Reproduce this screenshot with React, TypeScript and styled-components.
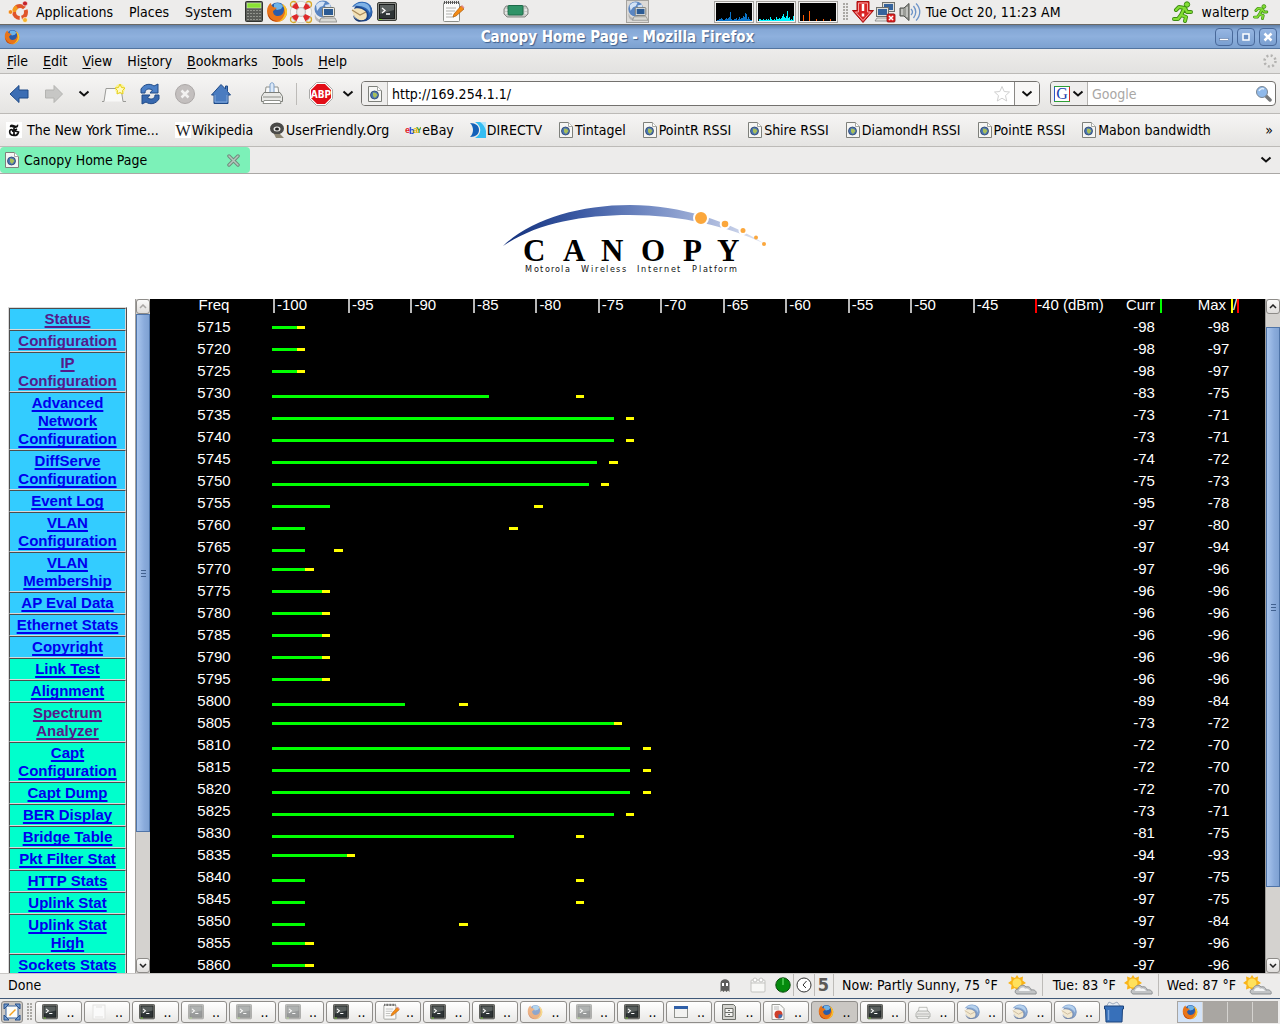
import React from "react";
import styled, { createGlobalStyle, css } from "styled-components";

const GlobalStyle = createGlobalStyle`
  * { box-sizing: border-box; }
  html, body { margin: 0; padding: 0; }
  body { background: #edeceb; color: #000; font: 14px/16px "DejaVu Sans Condensed", "DejaVu Sans", sans-serif; }
  button, input { font: inherit; color: inherit; }
`;

/* ---------- shared parts ---------- */

const Desktop = styled.div`
  display: flex;
  flex-direction: column;
  height: 100vh;
  overflow: hidden;
`;

const Group = styled.div<{ $gap?: number; $left?: number; $push?: boolean }>`
  display: flex;
  align-items: center;
  flex: none;
  gap: ${(p) => p.$gap ?? 0}px;
  margin-left: ${(p) => (p.$push ? "auto" : `${p.$left ?? 0}px`)};
`;

const IconButton = styled.button<{ $size?: number }>`
  display: flex;
  align-items: center;
  justify-content: center;
  flex: none;
  width: ${(p) => p.$size ?? 24}px;
  height: 24px;
  padding: 0;
  border: 0;
  background: none;
  svg { display: block; flex: none; }
`;

/* ---------- icons ---------- */

const Firefox = ({ s = 22, faded = false }: { s?: number; faded?: boolean }) => (
  <svg width={s} height={s} viewBox="0 0 22 22" opacity={faded ? 0.5 : 1} aria-hidden="true">
    <circle cx="11.5" cy="10" r="8.5" fill="#2a5caa" />
    <path d="M8 3c3-2 7-1 9 2l-2 3-4 1-3-2z" fill="#6db3e8" />
    <path d="M1 10C1 6 3 3 5 2c0 2 1 3 2 4l4 1c-2 1-2 2-4 3 0 3 2 5 5 5 4 0 6-3 6-7 0-2-1-4-2-5 4 2 5 5 5 8 0 6-5 10-10 10S1 17 1 10z" fill="#e8741a" />
    <path d="M16 3c4 2 5 5 5 8 0 5-4 9-9 10 4-2 6-5 7-9 0-3-1-6-3-9z" fill="#f9c62b" />
    <path d="M2 12c1 5 5 8 9 8-4 1-9-2-9-8z" fill="#a93408" />
  </svg>
);

const Thunderbird = ({ s = 22, faded = false }: { s?: number; faded?: boolean }) => (
  <svg width={s} height={s} viewBox="0 0 22 22" opacity={faded ? 0.55 : 1} aria-hidden="true">
    <circle cx="12" cy="11" r="9.5" fill="#1b4488" />
    <path d="M1 6C4 2 8 0 13 1c5 0 9 5 8 11-1 3-2 5-4 7 1-4 1-7-2-10-3-2-8-5-14-3z" fill="#2c66b4" />
    <path d="M3 5c4-4 9-4 13-2 3 2 4 6 3 9-2-5-8-8-16-7z" fill="#7fb2e6" />
    <path d="M1 9c4-3 10-2 13 1 3 3 2 8-1 9-6 2-11-4-12-10z" fill="#f3e2b8" />
    <path d="M1 9l8 5 6-3" fill="none" stroke="#a98a5a" strokeWidth="1.2" />
    <path d="M2 14c2 5 8 7 13 4-5 5-12 3-13-4z" fill="#16366f" />
  </svg>
);

const Terminal = ({ s = 20, faded = false }: { s?: number; faded?: boolean }) => (
  <svg width={s} height={s} viewBox="0 0 20 20" opacity={faded ? 0.45 : 1} aria-hidden="true">
    <rect x="0.5" y="0.5" width="19" height="18" rx="1.5" fill="#8b8d88" stroke="#3c3e3a" />
    <rect x="2.5" y="2.5" width="15" height="14" fill="#2e3436" stroke="#1a1c1c" />
    <path d="M3 3h14v5L3 12z" fill="#5a605f" />
    <path d="M5 6l3 2.5L5 11M9 12h4" fill="none" stroke="#fff" strokeWidth="1.3" />
    <path d="M2 17.500h3" stroke="#7ad42c" />
  </svg>
);

const Ubuntu = () => (
  <svg width="24" height="24" viewBox="0 0 24 24" aria-hidden="true">
    <circle cx="13" cy="12" r="6" fill="none" stroke="#e0552a" strokeWidth="4" strokeDasharray="10.5 2" strokeDashoffset="3" />
    <path d="M7 12a6 6 0 0 1 3-5" fill="none" stroke="#f49a1e" strokeWidth="4" />
    <circle cx="3.5" cy="12" r="2.300" fill="#f08a1c" stroke="#fff" strokeWidth="0.600" />
    <circle cx="18" cy="3.500" r="2.500" fill="#c4232a" stroke="#fff" strokeWidth="0.600" />
    <circle cx="18" cy="20" r="2.500" fill="#f7b42c" stroke="#fff" strokeWidth="0.600" />
  </svg>
);

const Calculator = () => (
  <svg width="20" height="24" viewBox="0 0 20 24" aria-hidden="true">
    <rect x="1.500" y="1.500" width="17" height="20" rx="1" fill="#5b5d59" stroke="#30322f" />
    <rect x="3" y="3" width="14" height="5" fill="#8ae234" stroke="#dfeccd" strokeWidth="0.500" />
    {[11, 14, 17, 20].map((y) => (
      <path key={y} d={`M3 ${y - 0.5}h14`} stroke="#93958f" strokeDasharray="2 1" />
    ))}
  </svg>
);

const Lifebuoy = () => (
  <svg width="24" height="24" viewBox="0 0 24 24" aria-hidden="true">
    <g fill="none" stroke="#d9a928" strokeWidth="1.300">
      <circle cx="4.500" cy="4.500" r="3" />
      <circle cx="19.500" cy="4.500" r="3" />
      <circle cx="4.500" cy="19.500" r="3" />
      <circle cx="19.500" cy="19.500" r="3" />
    </g>
    <circle cx="12" cy="12" r="7.500" fill="none" stroke="#bdbdba" strokeWidth="6.600" />
    <circle cx="12" cy="12" r="7.500" fill="none" stroke="#f6f6f4" strokeWidth="5.600" />
    <circle cx="12" cy="12" r="7.500" fill="none" stroke="#dd2a2a" strokeWidth="5.600" strokeDasharray="5 6.780" strokeDashoffset="-3.400" />
    <circle cx="12" cy="12" r="4.300" fill="#edeceb" stroke="#999" strokeWidth="0.500" />
  </svg>
);

const GlobeComputer = ({ s = 24 }: { s?: number }) => (
  <svg width={s} height={s} viewBox="0 0 24 24" aria-hidden="true">
    <circle cx="10" cy="9" r="8.500" fill="#5a86c2" />
    <path d="M3 5c3-4 6-4 9-3l-2 4-3 1-3 4zM12 5l5-1 1 4-5 2z" fill="#d3e2f5" />
    <rect x="9.500" y="7.500" width="12" height="9" rx="1" fill="#e8e8e4" stroke="#73756f" />
    <rect x="11" y="9" width="9" height="6" fill="#2b5b94" />
    <path d="M8 18h14l2 4H6z" fill="#d8d8d3" stroke="#7b7d78" strokeWidth="0.700" />
    <path d="M2 14c1 4 4 6 6 5l-1 3c-4 0-6-4-5-8z" fill="#999" opacity="0.600" />
  </svg>
);

const Notepad = ({ s = 24 }: { s?: number }) => (
  <svg width={s} height={s} viewBox="0 0 24 24" aria-hidden="true">
    <rect x="2.500" y="2.500" width="16" height="19" rx="1" fill="#fbfbfa" stroke="#8d8f8a" />
    <path d="M3 2.500h15" stroke="#555" strokeWidth="3" strokeDasharray="1 1" />
    <path d="M5 8h10M5 11h9M5 14h6M5 17h8" stroke="#b0b0ac" />
    <path d="M20 6l3 3-8 7-3 1 1-3z" fill="#f58b14" stroke="#a85a08" strokeWidth="0.700" />
    <path d="M20.500 5.500L23 8" stroke="#e58a8a" strokeWidth="1.500" />
  </svg>
);

const Chip = () => (
  <svg width="26" height="18" viewBox="0 0 26 18" aria-hidden="true">
    <path d="M3 3h20l2 3v5l-3 3H4l-3-3V6z" fill="#c9cac7" stroke="#858782" />
    <rect x="5" y="2.500" width="15" height="9.500" rx="1" fill="#2f9367" stroke="#1e6a49" />
    <path d="M2 7h2.500M2 10h2.500M21.500 7H24M21.500 10H24" stroke="#fff" />
  </svg>
);

const UpdateArrow = () => (
  <svg width="22" height="24" viewBox="0 0 22 24" aria-hidden="true">
    <path d="M5 1.500h12v9h4.500L11 22.500.5 10.500H5z" fill="#d92525" stroke="#a80d0d" />
    <path d="M6.500 3h9v9h3L11 20.500 3.500 12h3z" fill="none" stroke="#f5a3a3" />
    <path d="M11 4v7M11 13.500v3" stroke="#fff" strokeWidth="2.500" />
  </svg>
);

const NetworkOff = () => (
  <svg width="24" height="24" viewBox="0 0 24 24" aria-hidden="true">
    <rect x="8.500" y="2.500" width="12" height="9" fill="#35639c" stroke="#6e706c" />
    <rect x="9.500" y="3.500" width="10" height="7" fill="none" stroke="#dededa" />
    <path d="M10 14h10v2H10z" fill="#e3e3df" stroke="#777" strokeWidth="0.600" />
    <rect x="2.500" y="7.500" width="12" height="9" fill="#35639c" stroke="#6e706c" />
    <rect x="3.500" y="8.500" width="10" height="7" fill="none" stroke="#dededa" />
    <path d="M1 21l2-3h11l2 3z" fill="#e3e3df" stroke="#777" strokeWidth="0.700" />
    <rect x="13" y="14" width="8" height="8" rx="1" fill="#e02323" stroke="#8d0b0b" strokeWidth="0.800" />
    <path d="M15 16l4 4M19 16l-4 4" stroke="#fff" strokeWidth="1.500" />
  </svg>
);

const Speaker = () => (
  <svg width="24" height="24" viewBox="0 0 24 24" aria-hidden="true">
    <path d="M2 8h4l5-4.500v17L6 16H2z" fill="#9b9d98" stroke="#4c4e4a" />
    <path d="M4 9v6M9 7v10" stroke="#e7e7e4" />
    <path d="M13 9c2 2 2 4 0 6M15.500 6c3 4 3 8 0 12M18 3.500c5 5 5 12 0 17" fill="none" stroke="#6c93c8" strokeWidth="1.300" />
  </svg>
);

const Runner = ({ s = 22 }: { s?: number }) => (
  <svg width={s} height={s} viewBox="0 0 22 22" aria-hidden="true">
    <g fill="none" strokeLinecap="round" strokeLinejoin="round">
      <path d="M4 9l3-3 6 1 2 4h4M12 8l-3 6 5 2-1 4M9 14l-3 4H2" stroke="#3d8b12" strokeWidth="4" />
      <path d="M4 9l3-3 6 1 2 4h4M12 8l-3 6 5 2-1 4M9 14l-3 4H2" stroke="#83de35" strokeWidth="2.200" />
    </g>
    <circle cx="15" cy="3.500" r="2.700" fill="#83de35" stroke="#3d8b12" />
  </svg>
);

const Arrow = ({ faded = false }: { faded?: boolean }) => (
  <svg width="20" height="20" viewBox="0 0 20 20" aria-hidden="true">
    {faded ? (
      <path d="M18.500 10L10 1.500V6H1.500v8H10v4.500z" fill="#c7c7c5" stroke="#b4b4b1" />
    ) : (
      <path d="M1 10l9-8.500V6h9v8h-9v4.500z" fill="#3c6eb4" stroke="#1f4a87" />
    )}
  </svg>
);

const Chevron = () => (
  <svg width="12" height="8" viewBox="0 0 12 8" aria-hidden="true">
    <path d="M1.500 1.500L6 5.500l4.500-4" fill="none" stroke="#111" strokeWidth="2" />
  </svg>
);

const NewTab = () => (
  <svg width="26" height="24" viewBox="0 0 26 24" aria-hidden="true">
    <path d="M1 19.500h2l2-13h15l2 13h3" fill="#f8f8f7" stroke="#9b9b98" />
    <circle cx="19" cy="7" r="5" fill="#fdf27b" opacity="0.800" />
    <path d="M19 2l1.500 3.500 3.500.5-2.500 2.500.5 3.500-3-1.500-3 1.500.5-3.500L14 6l3.500-.5z" fill="#fff9c2" stroke="#e5cf1b" />
  </svg>
);

const Reload = () => (
  <svg width="22" height="22" viewBox="0 0 22 22" aria-hidden="true">
    <path d="M2 10V6c3-5 9-6 13-3l4-2v9h-8l2.500-3C10 5 6 6 6 10z" fill="#4a7fc6" stroke="#1f4a87" />
    <path d="M20 12v4c-3 5-9 6-13 3l-4 2v-9h8l-2.500 3c3.500 2 7.500 1 7.500-3z" fill="#3768ae" stroke="#1f4a87" />
  </svg>
);

const Stop = () => (
  <svg width="22" height="22" viewBox="0 0 22 22" aria-hidden="true">
    <circle cx="11" cy="11" r="9.500" fill="#c3bfbe" stroke="#aca8a7" />
    <path d="M7.500 7.500l7 7M14.500 7.500l-7 7" stroke="#f3f2f1" strokeWidth="2.500" />
  </svg>
);

const Home = () => (
  <svg width="22" height="22" viewBox="0 0 22 22" aria-hidden="true">
    <path d="M11 1.500L1.500 12H4v8.500h14V12h2.500l-3-3.500V3h-2v3z" fill="#4a7cc0" stroke="#1f4a87" />
    <path d="M5 12v7h12v-7" fill="none" stroke="#82a9dc" />
  </svg>
);

const Printer = ({ s = 24, faded = false }: { s?: number; faded?: boolean }) => (
  <svg width={s} height={s} viewBox="0 0 24 24" opacity={faded ? 0.8 : 1} aria-hidden="true">
    <path d="M6 5h12l1 8H5z" fill="#fafaf9" stroke="#8e908b" />
    {!faded && <path d="M10 10V3c0-3 4-3 4 0v7" fill="#dbe8f7" stroke="#7d9fc9" />}
    <path d="M4 10.500h16l2.500 4v5h-21v-5z" fill="#e9e9e6" stroke="#7c7e79" />
    <path d="M3 15h18" stroke="#8b8d88" />
    <path d="M4 18.500h16l1 3H3z" fill="#fff" stroke="#8e908b" />
  </svg>
);

const AdBlock = () => (
  <svg width="24" height="24" viewBox="0 0 24 24" aria-hidden="true">
    <path d="M7.500.5h9l7 7v9l-7 7h-9l-7-7v-9z" fill="#fff" stroke="#a9a9a7" />
    <path d="M8 2h8l6 6v8l-6 6H8l-6-6V8z" fill="#e20d17" />
    <text x="12" y="16" textAnchor="middle" fontFamily="DejaVu Sans Condensed" fontWeight="bold" fontSize="10" fill="#fff">ABP</text>
  </svg>
);

const PageGlobe = () => (
  <svg width="16" height="16" viewBox="0 0 16 16" aria-hidden="true">
    <path d="M1.500.5h9l4 4v11h-13z" fill="#f6f6f4" stroke="#7e807b" />
    <path d="M10.500.5v4h4" fill="#fff" stroke="#a5a7a2" />
    <circle cx="7.500" cy="9" r="4" fill="#4d78b3" stroke="#29406b" strokeWidth="0.800" />
    <path d="M6 6.500l3 .5 1.500 2-2.500 3-2-2z" fill="#a9bf5a" />
  </svg>
);

const Star = () => (
  <svg width="18" height="18" viewBox="0 0 18 18" aria-hidden="true">
    <path d="M9 1.500l2.200 5 5.300.5-4 3.600 1.200 5.400L9 13.200 4.300 16l1.200-5.400-4-3.600 5.300-.5z" fill="#fff" stroke="#d0d0d0" />
  </svg>
);

const Magnifier = () => (
  <svg width="18" height="18" viewBox="0 0 18 18" aria-hidden="true">
    <path d="M11 11l4 4" stroke="#77797a" strokeWidth="3.500" strokeLinecap="round" />
    <circle cx="7" cy="7" r="5.500" fill="#8fb9ea" stroke="#7b8794" />
    <path d="M4 6c1-2 3-3 5-2" fill="none" stroke="#e3f0fd" strokeWidth="1.500" />
  </svg>
);

const GoogleG = () => (
  <svg width="16" height="16" viewBox="0 0 16 16" aria-hidden="true">
    <rect width="16" height="16" fill="#fff" />
    <path d="M.5 16V0" stroke="#2a56c6" />
    <path d="M0 .5h16M0 15.500h16" stroke="#2f9e36" />
    <path d="M15.500 1v14" stroke="#cc2a2a" />
    <text x="8" y="13" textAnchor="middle" fontFamily="Liberation Serif" fontSize="16" fill="#1a3fae">G</text>
  </svg>
);

const Throbber = () => (
  <svg width="14" height="14" viewBox="0 0 14 14" aria-hidden="true">
    <circle cx="7" cy="7" r="5.500" fill="none" stroke="#b3b2b0" strokeWidth="2.500" strokeDasharray="2 2.320" />
  </svg>
);

const TimesIcon = () => (
  <svg width="16" height="16" viewBox="0 0 16 16" aria-hidden="true">
    <rect width="16" height="16" fill="#fff" />
    <path d="M4 5.500C3 2 6 2 8 3s3 1 4-1c1 3-1 4-3 4S5 4 4 5.500z" fill="#111" />
    <path d="M8 6v8M11 7l-3 1.500M4 8c2-1 3 0 3 2M4 8c-1 3 0 5 4 5.500 2 0 4-1 4.500-3.500L9 9" fill="none" stroke="#111" strokeWidth="1.700" />
  </svg>
);

const WikiIcon = () => (
  <svg width="16" height="16" viewBox="0 0 16 16" aria-hidden="true">
    <rect width="16" height="16" fill="#fff" />
    <text x="8" y="14" textAnchor="middle" fontFamily="Liberation Serif" fontSize="16" fill="#222">W</text>
  </svg>
);

const UserFriendlyIcon = () => (
  <svg width="16" height="16" viewBox="0 0 16 16" aria-hidden="true">
    <ellipse cx="8" cy="6.500" rx="7" ry="6" fill="#4a4a48" />
    <ellipse cx="8" cy="7" rx="3.500" ry="2.500" fill="#e8e8e6" />
    <ellipse cx="8" cy="7" rx="2" ry="1.500" fill="#222" />
    <path d="M5 12h6l4 4H7z" fill="#8f8875" />
  </svg>
);

const EbayIcon = () => (
  <svg width="16" height="16" viewBox="0 0 16 16" aria-hidden="true">
    <g fontFamily="Liberation Sans" fontWeight="bold" fontSize="9">
      <text x="0" y="11" fill="#e21b1b">e</text>
      <text x="4" y="12" fill="#1a3fd0">b</text>
      <text x="8" y="11" fill="#e5b400">a</text>
      <text x="11" y="11" fill="#3c9a1a">Y</text>
    </g>
  </svg>
);

const DirectvIcon = () => (
  <svg width="16" height="16" viewBox="0 0 16 16" aria-hidden="true">
    <path d="M5 0h11v16H5c7-4 7-12 0-16z" fill="#35bdf2" />
    <path d="M10 0h6v9c-1-4-3-7-6-9z" fill="#b5e6fb" />
    <path d="M0 1c6 0 9 3 9 7s-3 7-9 7c4-4 4-10 0-14z" fill="#1461b8" />
  </svg>
);

const CloseX = () => (
  <svg width="13" height="13" viewBox="0 0 13 13" aria-hidden="true">
    <path d="M2 2l9 9M11 2l-9 9" stroke="#6f8a7c" strokeWidth="3.500" strokeLinecap="round" />
    <path d="M2 2l9 9M11 2l-9 9" stroke="#b4c8bd" strokeWidth="1.500" strokeLinecap="round" />
  </svg>
);

const Ghost = () => (
  <svg width="10" height="13" viewBox="0 0 10 13" aria-hidden="true">
    <path d="M.5 13V4C1-1 9-1 9.500 4v9L8 11.500 6.500 13 5 11.500 3.500 13 2 11.500z" fill="#5d5d5b" />
    <path d="M2 4h2v3H2zM6 4h2v3H6z" fill="#fff" />
  </svg>
);

const CalendarPage = () => (
  <svg width="16" height="16" viewBox="0 0 16 16" aria-hidden="true">
    <rect x="1" y="3" width="14" height="12" rx="1" fill="#f8f8f6" stroke="#c3c3c0" />
    <path d="M1 6h14" stroke="#c3c3c0" />
    <circle cx="5" cy="3" r="2" fill="#fff" stroke="#c3c3c0" />
    <circle cx="11" cy="3" r="2" fill="#fff" stroke="#c3c3c0" />
  </svg>
);

const GreenDial = () => (
  <svg width="16" height="16" viewBox="0 0 16 16" aria-hidden="true">
    <circle cx="8" cy="8" r="7.200" fill="#058a0d" stroke="#0a4d0d" />
    <path d="M8 8V1" stroke="#79f07c" />
  </svg>
);

const ClockFace = () => (
  <svg width="16" height="16" viewBox="0 0 16 16" aria-hidden="true">
    <circle cx="8" cy="8" r="7" fill="#fff" stroke="#333" />
    <path d="M10.500 4L7 8l3 3" fill="none" stroke="#333" />
  </svg>
);

const Weather = () => (
  <svg width="30" height="20" viewBox="0 0 30 20" aria-hidden="true">
    <path d="M9 0l2 3 4-1.500-.5 4L18 8l-3.500 2 .5 4.500-4-1.500-2 3.500L7 13l-4 1.500.5-4.500L0 8l3.500-2.500L3 1.500 7 3z" fill="#f9b418" />
    <circle cx="9" cy="8" r="4.500" fill="#ffe15c" />
    <path d="M9 19c-3-1-2-5 1-5 1-4 6-5 8-2 3-1 5 1 5 3 4-1 6 2 5 4z" fill="#c2c4c6" stroke="#8d9093" />
    <path d="M11 16c0-3 5-5 6-2 2-1 4 0 5 2z" fill="#f4f5f6" />
  </svg>
);

const ShowDesktop = () => (
  <svg width="18" height="18" viewBox="0 0 18 18" aria-hidden="true">
    <rect x="3" y="3" width="12" height="12" fill="#fcfcf8" stroke="#3465a4" />
    <path d="M1 1h5L1 6zM17 1v5l-5-5zM1 17v-5l5 5zM17 17h-5l5-5z" fill="#6f9bd1" stroke="#2a528b" />
    <path d="M6 12l6-6 1 1-6 6z" fill="#f5a11e" />
  </svg>
);

const PaleSheet = () => (
  <svg width="16" height="16" viewBox="0 0 16 16" aria-hidden="true">
    <rect x="2" y="1" width="12" height="14" fill="#fafafa" stroke="#e2e1df" />
    <path d="M5 3h6M4 13h8" stroke="#e2e1df" />
  </svg>
);

const WindowIcon = () => (
  <svg width="16" height="16" viewBox="0 0 16 16" aria-hidden="true">
    <rect x="1.500" y="2.500" width="13" height="11" fill="#f2f2f0" stroke="#8f918c" />
    <path d="M1 3.500h14" stroke="#2f5fa8" strokeWidth="3" />
  </svg>
);

const Cabinet = () => (
  <svg width="16" height="16" viewBox="0 0 16 16" aria-hidden="true">
    <path d="M1.500.5h11l2 2v13h-13z" fill="#d3d3cf" stroke="#6c6e69" />
    <path d="M4 4.500h8v4H4zM4 8.500h8v4H4zM7 6.500h2M7 10.500h2" fill="#f4f4f2" stroke="#6c6e69" />
  </svg>
);

const ChartDoc = () => (
  <svg width="16" height="16" viewBox="0 0 16 16" aria-hidden="true">
    <path d="M2 .5h8l4 4v11H2z" fill="#fafaf9" stroke="#999b96" />
    <path d="M4 3h5M4 5h5" stroke="#bbb" />
    <circle cx="8.500" cy="10.500" r="4" fill="#cf3f2a" />
    <path d="M8.500 10.500v4a4 4 0 0 0 4-4z" fill="#3f6cae" />
  </svg>
);

const Trash = () => (
  <svg width="20" height="22" viewBox="0 0 20 22" aria-hidden="true">
    <path d="M2 6l3-5 4 2 4-2 4 5z" fill="#e8edf3" stroke="#8b9bb0" strokeWidth="0.800" />
    <path d="M.5 5h19v3h-1l-.5 13H2L1.500 8h-1z" fill="#3770ba" stroke="#1e457c" />
    <path d="M4.500 9v10" stroke="#7ca7dd" strokeWidth="1.500" />
  </svg>
);

const NetGraph = ({ color, label, bars }: { color: string; label: string; bars: number[] }) => (
  <svg width="40" height="22" viewBox="0 0 40 22" role="img" aria-label={label}>
    <rect x="0.500" y="0.500" width="39" height="21" fill="#000" stroke="#a5a39f" />
    <rect x="1.500" y="1.500" width="37" height="19" fill="none" stroke="#f4f3f2" />
    {bars.map((h, i) => (
      <rect key={i} x={3 + i} y={20 - h} width="1" height={h} fill={color} />
    ))}
  </svg>
);

const CanopyLogo = () => (
  <svg width="300" height="100" viewBox="0 0 300 100" role="img" aria-label="Canopy, Motorola Wireless Internet Platform">
    <defs>
      <linearGradient id="arc" x1="0" x2="1" y1="0" y2="0">
        <stop offset="0" stopColor="#12307c" />
        <stop offset="0.300" stopColor="#3d5ba4" />
        <stop offset="0.600" stopColor="#7d93c8" />
        <stop offset="0.800" stopColor="#aab8dc" />
        <stop offset="1" stopColor="#e3e8f4" />
      </linearGradient>
    </defs>
    <path d="M13 56C40 30 88 15 140 15c52 0 100 17 135 39-35-17-83-29-135-29C90 25 45 34 13 56z" fill="url(#arc)" />
    <g fill="#fba73c" stroke="#fff" strokeWidth="2">
      <circle cx="211" cy="28" r="7" />
      <circle cx="235" cy="34" r="4.300" />
      <circle cx="253" cy="40.500" r="3.500" />
    </g>
    <circle cx="266" cy="47.500" r="2" fill="#fba73c" />
    <circle cx="274" cy="54" r="2" fill="#fba73c" />
    <text x="33 73 111 151 193 227" y="71" fontFamily="Liberation Serif" fontWeight="bold" fontSize="31">CANOPY</text>
    <g fontFamily="DejaVu Sans Condensed" fontSize="9" fill="#111">
      <text y="82" x="35 44 50 55 61 65 71 75">Motorola</text>
      <text y="82" x="91 101 105 110 116 120 126 132">Wireless</text>
      <text y="82" x="147 151 158 163 169 174 181 187">Internet</text>
      <text y="82" x="202 209 213 219 224 228 234 239">Platform</text>
    </g>
  </svg>
);

/* ---------- desktop panel ---------- */

const TopPanel = styled.header`
  display: flex;
  align-items: center;
  flex: none;
  height: 25px;
  padding: 0 11px 1px 7px;
  background: #edeceb;
  border-bottom: 1px solid #6b6965;
  white-space: nowrap;
`;

const PanelMenu = styled.button`
  height: 24px;
  padding: 0 8px;
  border: 0;
  background: none;
`;

const Handle = styled.span`
  flex: none;
  width: 5px;
  height: 18px;
  background: radial-gradient(circle at 1px 1px, #aaa8a4 1px, transparent 1px) 0 0 / 3px 3px;
`;

const Framed = styled.span`
  display: flex;
  padding: 0;
  border: 1px solid #a5a39f;
  background: #dcdad7;
`;

/* ---------- browser chrome ---------- */

const TitleBar = styled.div`
  display: flex;
  align-items: center;
  flex: none;
  height: 24px;
  padding: 0 3px 0 4px;
  background: linear-gradient(#5f7ea6, #85a8d6 20%, #8eb0dd 50%, #7ca1d0);
  border-bottom: 1px solid #52749f;
`;

const WindowTitle = styled.h1`
  flex: 1;
  margin: 0;
  text-align: center;
  color: #fff;
  font: bold 15px/22px "DejaVu Sans Condensed", "DejaVu Sans", sans-serif;
  text-shadow: 1px 1px 1px #41618e;
`;

const WindowButton = styled.button`
  display: flex;
  align-items: center;
  justify-content: center;
  width: 18px;
  height: 18px;
  padding: 0;
  border: 1px solid #49699a;
  border-radius: 4px;
  background: linear-gradient(#96b6e2, #7a9fd0);
`;

const MenuBar = styled.nav`
  display: flex;
  align-items: center;
  flex: none;
  gap: 15px;
  height: 25px;
  padding: 0 3px 0 7px;
  background: linear-gradient(#edeceb, #e3e2e0);
  border-bottom: 1px solid #bcbab7;
`;

const MenuButton = styled.button`
  padding: 0;
  border: 0;
  background: none;
  u { text-underline-offset: 2px; }
`;

const toolbarFace = css`
  background: linear-gradient(#f6f5f4, #e5e4e2);
  border-bottom: 1px solid #bcbab7;
`;

const Toolbar = styled.div`
  display: flex;
  align-items: center;
  flex: none;
  height: 40px;
  padding: 0 4px 0 6px;
  ${toolbarFace}
`;

const Divider = styled.span<{ $space?: number }>`
  flex: none;
  width: 1px;
  height: 22px;
  margin: 0 ${(p) => p.$space ?? 0}px;
  background: #bdbbb8;
`;

const Field = styled.div<{ $grow?: boolean }>`
  display: flex;
  align-items: stretch;
  flex: ${(p) => (p.$grow ? "1 1 auto" : "0 0 226px")};
  min-width: 0;
  height: 25px;
  border: 1px solid #73716e;
  border-radius: 4px;
  background: #fff;
  overflow: hidden;
`;

const FieldCap = styled.button<{ $w: number; $side?: "left" | "right" }>`
  display: flex;
  align-items: center;
  justify-content: center;
  gap: 2px;
  flex: none;
  width: ${(p) => p.$w}px;
  padding: 0;
  border: 0;
  background: ${(p) => (p.$side ? "#efeeed" : "none")};
  ${(p) => p.$side === "left" && "border-right: 1px solid #b5b3b0;"}
  ${(p) => p.$side === "right" && "border-left: 1px solid #8a8885; background: #f8f7f6;"}
`;

const FieldInput = styled.input`
  flex: 1;
  min-width: 0;
  padding: 0 4px;
  border: 0;
  outline: 0;
  background: none;
  &::placeholder { color: #a9a7a5; opacity: 1; }
`;

const BookmarkBar = styled.nav`
  display: flex;
  align-items: center;
  flex: none;
  gap: 16px;
  height: 33px;
  padding: 0 7px 0 6px;
  white-space: nowrap;
  ${toolbarFace}
`;

const Bookmark = styled.a<{ $gap?: number }>`
  display: flex;
  align-items: center;
  gap: ${(p) => p.$gap ?? 1}px;
  color: #000;
  text-decoration: none;
`;

const Overflow = styled.button`
  margin-left: auto;
  padding: 0;
  border: 0;
  background: none;
`;

const TabStrip = styled.div`
  display: flex;
  align-items: stretch;
  flex: none;
  height: 27px;
  background: #edeceb;
  border-bottom: 1px solid #aaa8a5;
`;

const Tab = styled.div`
  display: flex;
  align-items: center;
  gap: 4px;
  width: 250px;
  padding: 0 5px 0 4px;
  border-radius: 4px;
  background: #7cf1b8;
`;

const TabLabel = styled.span`
  flex: 1;
`;

/* ---------- page ---------- */

const Page = styled.main`
  display: flex;
  flex: 1;
  min-height: 0;
  flex-direction: column;
  background: #fff;
`;

const Banner = styled.div`
  display: flex;
  justify-content: center;
  flex: none;
  height: 125px;
  padding-top: 16px;
`;

const Frames = styled.div`
  display: flex;
  flex: 1;
  min-height: 0;
`;

const NavFrame = styled.nav`
  flex: 0 0 135px;
  padding: 8px;
  overflow: hidden;
`;

const NavTable = styled.table`
  width: 119px;
  border: 1px solid;
  border-color: #d9d9d9 #4d4d4d #4d4d4d #d9d9d9;
  border-spacing: 0;
`;

const NavCell = styled.td<{ $local?: boolean }>`
  padding: 1px;
  border: 1px solid;
  border-color: #4d4d4d #d9d9d9 #d9d9d9 #4d4d4d;
  background: ${(p) => (p.$local ? "#00ffcc" : "#33ccff")};
  text-align: center;
  font: bold 15px/18px "Liberation Sans", Arial, sans-serif;
`;

const NavLink = styled.a<{ $seen?: boolean }>`
  color: ${(p) => (p.$seen ? "#551a8b" : "#0000ee")};
  text-decoration: underline 2px;
  text-underline-offset: 2px;
  text-decoration-skip-ink: none;
`;

const Track = styled.div`
  display: flex;
  flex: 0 0 15px;
  flex-direction: column;
  background: #d4d2cf;
  border-left: 1px solid #a19f9c;
`;

const StepButton = styled.button`
  display: flex;
  align-items: center;
  justify-content: center;
  flex: 0 0 15px;
  padding: 0;
  border: 1px solid #8d8b88;
  border-radius: 3px;
  background: linear-gradient(#fbfbfa, #dfdddb);
`;

const Thumb = styled.div<{ $before: number; $size: number; $after: number }>`
  display: grid;
  flex: 1;
  grid-template-rows: ${(p) => `${p.$before}fr ${p.$size}fr ${p.$after}fr`};
  &::before { content: ""; }
`;

const ThumbFace = styled.span`
  display: flex;
  flex-direction: column;
  align-items: center;
  justify-content: center;
  gap: 2px;
  border: 1px solid #4f74a8;
  background: linear-gradient(90deg, #a9c6ee, #8aabdb 60%, #7fa2d3);
  i { width: 5px; height: 1px; background: #41618f; }
`;

const SpectrumFrame = styled.section`
  flex: 1;
  min-width: 0;
  padding: 0 9px 0 6px;
  overflow: hidden;
  background: #000;
`;

const Spectrum = styled.table`
  width: 100%;
  margin-top: -5px;
  table-layout: fixed;
  border-collapse: collapse;
  color: #fff;
  font: 15px/22px "Liberation Sans", Arial, sans-serif;
  th, td { height: 22px; padding: 0; font-weight: normal; text-align: center; }
`;

const PlotCell = styled.td`
  && { padding-right: 2px; }
`;

const Scale = styled.div`
  display: flex;
  height: 22px;
`;

const Mark = styled.span<{ $width: number; $tight?: boolean }>`
  display: flex;
  align-items: center;
  gap: ${(p) => (p.$tight ? 0 : 2)}px;
  flex: none;
  width: ${(p) => p.$width}%;
  padding-left: 1px;
  white-space: nowrap;
`;

const Tick = styled.i<{ $color: string }>`
  flex: none;
  width: 2px;
  height: 15px;
  background: ${(p) => p.$color};
`;

const KeyLabel = styled.span`
  display: flex;
  align-items: center;
  justify-content: center;
  gap: 5px;
`;

const KeyTicks = styled.span`
  display: flex;
  align-items: center;
`;

const Meter = styled.div<{ $joined: boolean }>`
  display: flex;
  height: 22px;
  padding-top: ${(p) => (p.$joined ? 10 : 13)}px;
`;

const Level = styled.span`
  height: 3px;
  background: #00ff00;
`;

const Peak = styled.span`
  width: 1%;
  height: 3px;
  background: #ffff00;
`;

/* ---------- status and task bars ---------- */

const StatusBar = styled.footer`
  display: flex;
  align-items: center;
  flex: none;
  height: 25px;
  padding: 0 7px 2px 8px;
  border-top: 1px solid #c9c7c5;
  background: #edeceb;
  white-space: nowrap;
`;

const Digit = styled.span`
  padding: 0 2px 0 1px;
  font: bold 18px/18px "DejaVu Sans Condensed", "DejaVu Sans", sans-serif;
  color: #5c5a58;
`;

const TaskBar = styled.footer`
  display: flex;
  align-items: center;
  flex: none;
  height: 26px;
  padding: 0 2px 0 1px;
  border-top: 1px solid #3f5878;
  background: #edeceb;
`;

const Tasks = styled.div`
  display: flex;
  flex: 1;
  gap: 2px;
  min-width: 0;
  margin: 0 4px 0 3px;
`;

const Task = styled.button<{ $active?: boolean }>`
  display: flex;
  align-items: center;
  justify-content: space-between;
  flex: 1;
  min-width: 0;
  height: 22px;
  padding: 0 6px;
  border: 1px solid #8f8d8a;
  border-radius: 3px;
  background: ${(p) => (p.$active ? "#cac7c3" : "linear-gradient(#ffffff, #e9e8e6)")};
  svg { display: block; }
`;

const DeskButton = styled.button`
  display: flex;
  align-items: center;
  justify-content: center;
  flex: none;
  width: 22px;
  height: 22px;
  margin-right: 4px;
  padding: 0;
  border: 1px solid #8f8d8a;
  border-radius: 3px;
  background: #cac7c3;
`;

const Workspaces = styled.div`
  display: grid;
  grid-template-columns: repeat(4, 1fr);
  gap: 1px;
  flex: none;
  width: 101px;
  height: 22px;
  margin-left: 53px;
  border: 1px solid #a8a5a1;
  background: #d5d3d0;
`;

const Workspace = styled.button<{ $current?: boolean }>`
  display: flex;
  align-items: center;
  justify-content: center;
  padding: 0;
  border: 0;
  background: ${(p) => (p.$current ? "#d3e3f8" : "#a9a6a2")};
`;

/* ---------- data ---------- */

const cpu = [1, 1, 2, 2, 3, 2, 1, 1, 2, 3, 2, 3, 4, 9, 2, 1, 1, 2, 2, 3, 1, 2, 4, 2, 3, 3, 5, 4, 8, 7, 2, 4, 2, 1, 1];
const net = [2, 2, 1, 1, 2, 1, 1, 2, 1, 2, 1, 4, 2, 1, 1, 2, 1, 4, 2, 2, 3, 2, 3, 5, 7, 4, 3, 5, 10, 3, 4, 1, 2, 1, 5];
const disk = [0, 0, 6, 0, 0, 0, 0, 0, 10, 0, 0, 0, 0, 0, 0, 2, 0, 0, 0, 0, 0, 0, 2, 0, 0, 0, 0, 0, 0, 2];

const menus: [string, string, string][] = [
  ["", "F", "ile"], ["", "E", "dit"], ["", "V", "iew"], ["Hi", "s", "tory"],
  ["", "B", "ookmarks"], ["", "T", "ools"], ["", "H", "elp"],
];

const bookmarks: [React.ReactNode, string][] = [
  [<WikiIcon />, "Wikipedia"], [<UserFriendlyIcon />, "UserFriendly.Org"], [<EbayIcon />, "eBay"],
  [<DirectvIcon />, "DIRECTV"], [<PageGlobe />, "Tintagel"], [<PageGlobe />, "PointR RSSI"],
  [<PageGlobe />, "Shire RSSI"], [<PageGlobe />, "DiamondH RSSI"], [<PageGlobe />, "PointE RSSI"],
  [<PageGlobe />, "Mabon bandwidth"],
];

const pages: { name: string; local?: boolean; seen?: boolean }[] = [
  { name: "Status", seen: true },
  { name: "Configuration", seen: true },
  { name: "IP Configuration", seen: true },
  { name: "Advanced Network Configuration" },
  { name: "DiffServe Configuration" },
  { name: "Event Log" },
  { name: "VLAN Configuration" },
  { name: "VLAN Membership" },
  { name: "AP Eval Data" },
  { name: "Ethernet Stats" },
  { name: "Copyright" },
  { name: "Link Test", local: true },
  { name: "Alignment", local: true },
  { name: "Spectrum Analyzer", local: true, seen: true },
  { name: "Capt Configuration", local: true },
  { name: "Capt Dump", local: true },
  { name: "BER Display", local: true },
  { name: "Bridge Table", local: true },
  { name: "Pkt Filter Stat", local: true },
  { name: "HTTP Stats", local: true },
  { name: "Uplink Stat", local: true },
  { name: "Uplink Stat High", local: true },
  { name: "Sockets Stats", local: true },
];

/* frequency, current dBm, max dBm, level end and peak start in scale steps */
const readings: [number, number, number, number, number][] = [
  [5715, -98, -98, 3, 3], [5720, -98, -97, 3, 3], [5725, -98, -97, 3, 3],
  [5730, -83, -75, 26, 36], [5735, -73, -71, 41, 42], [5740, -73, -71, 41, 42],
  [5745, -74, -72, 39, 40], [5750, -75, -73, 38, 39], [5755, -95, -78, 7, 31],
  [5760, -97, -80, 4, 28], [5765, -97, -94, 4, 7], [5770, -97, -96, 4, 4],
  [5775, -96, -96, 6, 6], [5780, -96, -96, 6, 6], [5785, -96, -96, 6, 6],
  [5790, -96, -96, 6, 6], [5795, -96, -96, 6, 6], [5800, -89, -84, 16, 22],
  [5805, -73, -72, 41, 41], [5810, -72, -70, 43, 44], [5815, -72, -70, 43, 44],
  [5820, -72, -70, 43, 44], [5825, -73, -71, 41, 42], [5830, -81, -75, 29, 36],
  [5835, -94, -93, 9, 9], [5840, -97, -75, 4, 36], [5845, -97, -75, 4, 36],
  [5850, -97, -84, 4, 22], [5855, -97, -96, 4, 4], [5860, -97, -96, 4, 4],
];

const marks = ["-100", "-95", "-90", "-85", "-80", "-75", "-70", "-65", "-60", "-55", "-50", "-45"];

const tasks: [string, React.ReactNode][] = [
  ["Terminal 1", <Terminal s={16} />], ["Document", <PaleSheet />], ["Terminal 2", <Terminal s={16} />],
  ["Terminal 3", <Terminal s={16} faded />], ["Terminal 4", <Terminal s={16} faded />], ["Terminal 5", <Terminal s={16} faded />],
  ["Terminal 6", <Terminal s={16} />], ["Notes", <Notepad s={18} />], ["Terminal 7", <Terminal s={16} />],
  ["Terminal 8", <Terminal s={16} />], ["Firefox 2", <Firefox s={16} faded />], ["Terminal 9", <Terminal s={16} faded />],
  ["Terminal 10", <Terminal s={16} />], ["Window", <WindowIcon />], ["Files", <Cabinet />],
  ["Report", <ChartDoc />], ["Canopy Home Page", <Firefox s={16} />], ["Terminal 11", <Terminal s={16} />],
  ["Printer", <Printer s={16} faded />], ["Mail 1", <Thunderbird s={16} faded />], ["Mail 2", <Thunderbird s={16} faded />],
  ["Mail 3", <Thunderbird s={16} faded />],
];

/* ---------- composition ---------- */

function StepArrow({ up = false, dim = false }: { up?: boolean; dim?: boolean }) {
  return (
    <svg width="8" height="5" viewBox="0 0 8 5" aria-hidden="true">
      <path d={up ? "M1 4l3-3 3 3" : "M1 1l3 3 3-3"} fill="none" stroke={dim ? "#a9a7a4" : "#222"} strokeWidth="1.500" />
    </svg>
  );
}

function Scrollbar({ before, size, after, atTop = false }: { before: number; size: number; after: number; atTop?: boolean }) {
  return (
    <Track>
      <StepButton aria-label="Scroll up"><StepArrow up dim={atTop} /></StepButton>
      <Thumb $before={before} $size={size} $after={after}>
        <ThumbFace><i /><i /><i /></ThumbFace>
      </Thumb>
      <StepButton aria-label="Scroll down"><StepArrow /></StepButton>
    </Track>
  );
}

function SpectrumRow({ reading }: { reading: [number, number, number, number, number] }) {
  const [freq, curr, max, level, peak] = reading;
  const joined = level === peak;
  return (
    <tr>
      <td>{freq}</td>
      <PlotCell>
        <Meter $joined={joined}>
          <Level style={{ width: `${level}%` }} />
          <Peak style={{ marginLeft: joined ? 0 : `calc(${peak - level}% + 4px)` }} />
        </Meter>
      </PlotCell>
      <td>{curr}</td>
      <td>{max}</td>
    </tr>
  );
}

export default function App() {
  return (
    <Desktop>
      <GlobalStyle />
      <TopPanel>
        <Ubuntu />
        <Group $left={-3}>
          <PanelMenu>Applications</PanelMenu>
          <PanelMenu>Places</PanelMenu>
          <PanelMenu>System</PanelMenu>
        </Group>
        <Group $left={3}>
          <IconButton $size={22} aria-label="Calculator"><Calculator /></IconButton>
          <IconButton $size={24} aria-label="Firefox"><Firefox /></IconButton>
          <IconButton aria-label="Help"><Lifebuoy /></IconButton>
          <IconButton aria-label="Network"><GlobeComputer /></IconButton>
        </Group>
        <Group $left={13} $gap={1}>
          <IconButton aria-label="Thunderbird"><Thunderbird /></IconButton>
          <IconButton aria-label="Terminal"><Terminal /></IconButton>
        </Group>
        <Group $left={42}>
          <IconButton aria-label="Notes"><Notepad /></IconButton>
        </Group>
        <Group $left={38}>
          <IconButton $size={26} aria-label="Memory"><Chip /></IconButton>
        </Group>
        <Group $push>
          <Framed><GlobeComputer s={21} /></Framed>
        </Group>
        <Group $left={65} $gap={2}>
          <NetGraph color="#0b74c9" label="Processor" bars={cpu} />
          <NetGraph color="#00f4ff" label="Network" bars={net} />
          <NetGraph color="#ff5a00" label="Disk" bars={disk} />
        </Group>
        <Group $left={5} $gap={4}>
          <Handle />
          <Group>
            <UpdateArrow />
            <NetworkOff />
            <Speaker />
          </Group>
          <span>Tue Oct 20, 11:23 AM</span>
        </Group>
        <Group $left={111} $gap={8}>
          <Runner />
          <Group $gap={4}>
            <span>walterp</span>
            <Runner s={16} />
          </Group>
        </Group>
      </TopPanel>

      <TitleBar>
        <Firefox s={16} />
        <WindowTitle>Canopy Home Page - Mozilla Firefox</WindowTitle>
        <Group $gap={4}>
          <WindowButton aria-label="Minimize">
            <svg width="10" height="10" viewBox="0 0 10 10"><rect x="0.500" y="6.500" width="9" height="2" fill="#fff" stroke="#49699a" strokeWidth="0.500" /></svg>
          </WindowButton>
          <WindowButton aria-label="Maximize">
            <svg width="10" height="10" viewBox="0 0 10 10"><rect x="2" y="2" width="6" height="6" fill="#6c90c4" stroke="#fff" strokeWidth="1.500" /></svg>
          </WindowButton>
          <WindowButton aria-label="Close">
            <svg width="10" height="10" viewBox="0 0 10 10"><path d="M1.500 1.500l7 7M8.500 1.500l-7 7" stroke="#fff" strokeWidth="2.500" /></svg>
          </WindowButton>
        </Group>
      </TitleBar>

      <MenuBar>
        {menus.map(([before, key, after]) => (
          <MenuButton key={key + after}>{before}<u>{key}</u>{after}</MenuButton>
        ))}
        <Group $push><Throbber /></Group>
      </MenuBar>

      <Toolbar>
        <Group>
          <IconButton $size={26} aria-label="Back"><Arrow /></IconButton>
        </Group>
        <Group $left={10}>
          <IconButton $size={24} aria-label="Forward"><Arrow faded /></IconButton>
        </Group>
        <Group $left={12}>
          <IconButton $size={12} aria-label="History"><Chevron /></IconButton>
        </Group>
        <Group $left={11} $gap={12}>
          <IconButton $size={26} aria-label="New tab"><NewTab /></IconButton>
          <IconButton $size={22} aria-label="Reload"><Reload /></IconButton>
          <IconButton $size={24} aria-label="Stop"><Stop /></IconButton>
          <IconButton $size={24} aria-label="Home"><Home /></IconButton>
        </Group>
        <Group $left={27}>
          <IconButton aria-label="Print"><Printer /></IconButton>
        </Group>
        <Divider $space={12} />
        <IconButton aria-label="Adblock"><AdBlock /></IconButton>
        <Group $left={9}>
          <IconButton $size={12} aria-label="Adblock options"><Chevron /></IconButton>
        </Group>
        <Group $left={7} />
        <Field $grow>
          <FieldCap $w={26} $side="left" aria-label="Site information"><PageGlobe /></FieldCap>
          <FieldInput aria-label="Address" defaultValue="http://169.254.1.1/" />
          <FieldCap $w={24} aria-label="Bookmark this page"><Star /></FieldCap>
          <FieldCap $w={25} $side="right" aria-label="Show history"><Chevron /></FieldCap>
        </Field>
        <Group $left={10} />
        <Field>
          <FieldCap $w={37} $side="left" aria-label="Search engine"><GoogleG /><Chevron /></FieldCap>
          <FieldInput aria-label="Search" placeholder="Google" />
          <FieldCap $w={22} aria-label="Search now"><Magnifier /></FieldCap>
        </Field>
      </Toolbar>

      <BookmarkBar>
        <Bookmark href="#" $gap={5}><TimesIcon />The New York Time...</Bookmark>
        {bookmarks.map(([icon, name]) => (
          <Bookmark key={name} href="#">{icon}{name}</Bookmark>
        ))}
        <Overflow aria-label="More bookmarks">»</Overflow>
      </BookmarkBar>

      <TabStrip>
        <Tab>
          <PageGlobe />
          <TabLabel>Canopy Home Page</TabLabel>
          <IconButton aria-label="Close tab"><CloseX /></IconButton>
        </Tab>
        <Group $push>
          <IconButton $size={28} aria-label="List tabs"><Chevron /></IconButton>
        </Group>
      </TabStrip>

      <Page>
        <Banner><CanopyLogo /></Banner>
        <Frames>
          <NavFrame>
            <NavTable>
              <tbody>
                {pages.map((p) => (
                  <tr key={p.name}>
                    <NavCell $local={p.local}><NavLink href="#" $seen={p.seen}>{p.name}</NavLink></NavCell>
                  </tr>
                ))}
              </tbody>
            </NavTable>
          </NavFrame>
          <Scrollbar before={0} size={520} after={126} atTop />
          <SpectrumFrame>
            <Spectrum>
              <colgroup>
                <col width="116" />
                <col />
                <col width="74" />
                <col width="75" />
              </colgroup>
              <thead>
                <tr>
                  <th>Freq</th>
                  <PlotCell as="th">
                    <Scale>
                      {marks.map((m, i) => (
                        <Mark key={m} $width={i === 0 ? 9 : 7.5}><Tick $color="#b8b8b8" />{m}</Mark>
                      ))}
                      <Mark $width={7.5} $tight><Tick $color="#ff0000" />-40 (dBm)</Mark>
                    </Scale>
                  </PlotCell>
                  <th><KeyLabel>Curr<Tick $color="#00ff00" /></KeyLabel></th>
                  <th>
                    <KeyLabel>
                      Max
                      <KeyTicks><Tick $color="#ffff00" />/<Tick $color="#ff0000" /></KeyTicks>
                    </KeyLabel>
                  </th>
                </tr>
              </thead>
              <tbody>
                {readings.map((r) => <SpectrumRow key={r[0]} reading={r} />)}
              </tbody>
            </Spectrum>
          </SpectrumFrame>
          <Scrollbar before={13} size={562} after={71} />
        </Frames>
      </Page>

      <StatusBar>
        <span>Done</span>
        <Group $push $gap={20}>
          <Ghost />
          <Group $gap={9}>
            <CalendarPage />
            <Group $gap={2}>
              <GreenDial />
              <Divider />
              <ClockFace />
              <Divider />
              <Digit>5</Digit>
              <Divider />
            </Group>
          </Group>
        </Group>
        <Group $left={8} $gap={10}>
          <span>Now: Partly Sunny, 75 °F</span>
          <Weather />
        </Group>
        <Divider $space={4} />
        <Group $left={6} $gap={8}>
          <span>Tue: 83 °F</span>
          <Weather />
        </Group>
        <Divider $space={4} />
        <Group $left={4} $gap={7}>
          <span>Wed: 87 °F</span>
          <Weather />
        </Group>
      </StatusBar>

      <TaskBar>
        <DeskButton aria-label="Show desktop"><ShowDesktop /></DeskButton>
        <Handle />
        <Tasks>
          {tasks.map(([name, icon]) => (
            <Task key={name} aria-label={name} $active={name === "Canopy Home Page"}>{icon}<span>..</span></Task>
          ))}
        </Tasks>
        <Trash />
        <Workspaces>
          <Workspace $current aria-label="Workspace 1"><Firefox s={16} /></Workspace>
          <Workspace aria-label="Workspace 2" />
          <Workspace aria-label="Workspace 3" />
          <Workspace aria-label="Workspace 4" />
        </Workspaces>
      </TaskBar>
    </Desktop>
  );
}
